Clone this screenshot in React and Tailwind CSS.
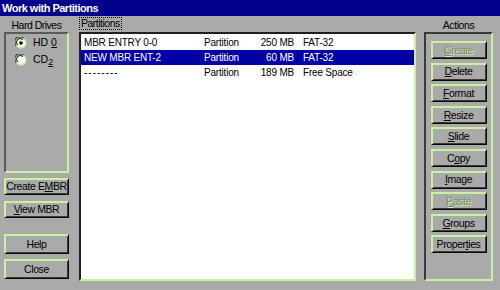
import React from "react";

const F = { fontFamily: '"Liberation Sans", Arial, sans-serif' };

function Btn({ children, className = "", disabled = false }) {
  return (
    <div
      className={
        "flex items-center justify-center bg-[#aaaaaa] border border-t-[#c8f2a0] border-l-[#c8f2a0] border-r-[#0a0a0a] border-b-[#0a0a0a] shadow-[inset_1px_1px_0_#c8f2a0,inset_-1px_-1px_0_#3a3a3a] text-[10.5px] tracking-[-0.4px] leading-none " +
        (disabled ? "text-[#7d8a74] [text-shadow:1px_1px_0_#c8f2a0] " : "text-black ") +
        className
      }
    >
      <span>{children}</span>
    </div>
  );
}

function Radio({ checked }) {
  return (
    <svg width="12" height="12" viewBox="0 0 12 12" className="shrink-0">
      <circle cx="6" cy="6" r="5.5" fill="#c8f2a0" />
      <path d="M1.2 8.5 A5 5 0 0 1 8.5 1.2" stroke="#505050" strokeWidth="1.4" fill="none" />
      <circle cx="6" cy="6" r="4" fill="#ffffff" />
      <path d="M2.6 7.8 A3.6 3.6 0 0 1 7.8 2.6" stroke="#111" strokeWidth="1" fill="none" />
      {checked && <circle cx="6" cy="6" r="1.8" fill="#000" />}
    </svg>
  );
}

const rows = [
  { name: "MBR ENTRY 0-0", type: "Partition", size: "250 MB", fs: "FAT-32" },
  { name: "NEW MBR ENT-2", type: "Partition", size: "60 MB", fs: "FAT-32", sel: true },
  { name: "--------", type: "Partition", size: "189 MB", fs: "Free Space", dash: true },
];

export default function App() {
  return (
    <div className="w-[500px] h-[290px] bg-[#aaaaaa] flex flex-col overflow-hidden" style={F}>
      {/* title bar */}
      <div className="h-[16px] bg-[#00008c] flex items-center pl-[2px]">
        <span className="text-white font-bold text-[11px] tracking-[-0.5px] leading-none">Work with Partitions</span>
      </div>

      <div className="flex flex-row">
        {/* left column */}
        <div className="ml-[4px] w-[65px] flex flex-col">
          <div className="h-[16px] flex items-end justify-center pb-[2px] text-[10.5px] tracking-[-0.5px] leading-none">Hard Drives</div>
          <div className="h-[141px] border-2 border-t-[#5a5a5a] border-l-[#5a5a5a] border-r-[#c8f2a0] border-b-[#c8f2a0] flex flex-col pl-[9px]">
            <div className="h-[17px] flex items-center gap-[6px] text-[10.5px] leading-none">
              <Radio checked />
              <span>HD <u>0</u></span>
            </div>
            <div className="h-[17px] flex items-center gap-[6px] text-[10.5px] leading-none">
              <Radio />
              <span>CD<u className="text-[9px] relative top-[2px]">2</u></span>
            </div>
          </div>
          <Btn className="mt-[5px] h-[17px] w-[65px]">Create E<u>M</u>BR</Btn>
          <Btn className="mt-[6px] h-[17px] w-[65px]"><u>V</u>iew MBR</Btn>
          <Btn className="mt-[16px] h-[20px] w-[65px]">Help</Btn>
          <Btn className="mt-[5px] h-[20px] w-[65px]">Close</Btn>
        </div>

        {/* middle */}
        <div className="ml-[10px] w-[337px] flex flex-col">
          <div className="h-[16px] flex items-start pt-[1px]">
            <span className="border border-dotted border-black px-[1px] h-[13px] flex items-center text-[10.5px] tracking-[-0.5px] leading-none">Partitions</span>
          </div>
          <div className="h-[249px] bg-white border-2 border-t-[#202020] border-l-[#202020] border-r-[#c8f2a0] border-b-[#c8f2a0] pt-[1px] flex flex-col">
            {rows.map((r, i) => (
              <div
                key={i}
                className={
                  "h-[15px] flex items-center pl-[3px] text-[10px] tracking-[-0.2px] leading-none " +
                  (r.sel ? "bg-[#0000a4] text-white" : "text-black")
                }
              >
                <span className={"w-[120px] " + (r.dash ? "tracking-[1px]" : "")}>{r.name}</span>
                <span className="w-[50px]">{r.type}</span>
                <span className="w-[40px] text-right">{r.size}</span>
                <span className="ml-[9px]">{r.fs}</span>
              </div>
            ))}
          </div>
        </div>

        {/* right */}
        <div className="ml-[8px] w-[69px] flex flex-col">
          <div className="h-[16px] flex items-end justify-center pb-[2px] text-[10.5px] tracking-[-0.4px] leading-none">Actions</div>
          <div className="h-[249px] border-2 border-t-[#3a3a3a] border-l-[#3a3a3a] border-r-[#c8f2a0] border-b-[#c8f2a0] flex flex-col items-center pt-[7px] gap-[3.6px]">
            <Btn disabled className="h-[18px] w-[56px] shrink-0"><u>C</u>reate</Btn>
            <Btn className="h-[18px] w-[56px] shrink-0"><u>D</u>elete</Btn>
            <Btn className="h-[18px] w-[56px] shrink-0"><u>F</u>ormat</Btn>
            <Btn className="h-[18px] w-[56px] shrink-0"><u>R</u>esize</Btn>
            <Btn className="h-[18px] w-[56px] shrink-0"><u>S</u>lide</Btn>
            <Btn className="h-[18px] w-[56px] shrink-0">C<u>o</u>py</Btn>
            <Btn className="h-[18px] w-[56px] shrink-0"><u>I</u>mage</Btn>
            <Btn disabled className="h-[18px] w-[56px] shrink-0"><u>P</u>aste</Btn>
            <Btn className="h-[18px] w-[56px] shrink-0"><u>G</u>roups</Btn>
            <Btn className="h-[18px] w-[56px] shrink-0">Proper<u>t</u>ies</Btn>
          </div>
        </div>
      </div>
    </div>
  );
}
